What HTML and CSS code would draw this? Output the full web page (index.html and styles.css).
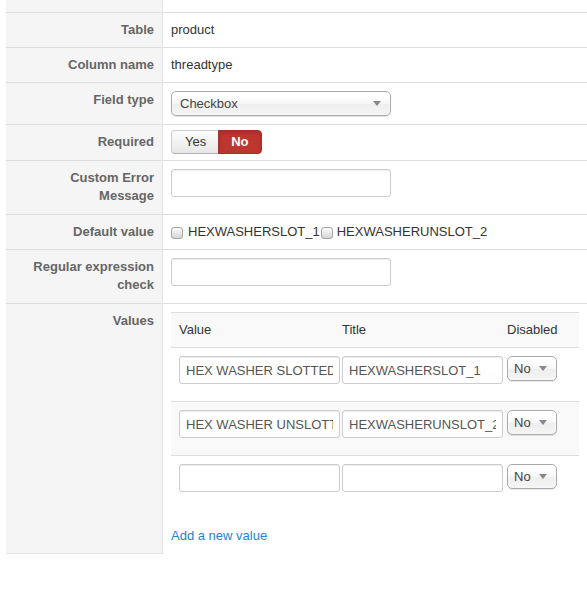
FILE: index.html
```html
<!DOCTYPE html>
<html lang="en">
<head>
<meta charset="utf-8">
<title>Field settings</title>
<link rel="stylesheet" href="styles.css">
</head>
<body>
<div class="page">
  <table class="form-table">
    <tr class="row-cut">
      <td class="key"></td>
      <td class="val"></td>
    </tr>
    <tr>
      <td class="key">Table</td>
      <td class="val">product</td>
    </tr>
    <tr>
      <td class="key">Column name</td>
      <td class="val">threadtype</td>
    </tr>
    <tr>
      <td class="key">Field type</td>
      <td class="val">
        <div class="chosen chosen-wide"><span>Checkbox</span><b class="caret"></b></div>
      </td>
    </tr>
    <tr>
      <td class="key">Required</td>
      <td class="val val-buttons">
        <div class="yesno">
          <span class="btn btn-yes">Yes</span>
          <span class="btn btn-no">No</span>
        </div>
      </td>
    </tr>
    <tr>
      <td class="key">Custom Error<br>Message</td>
      <td class="val"><input class="text-input" type="text"></td>
    </tr>
    <tr>
      <td class="key">Default value</td>
      <td class="val">
        <label class="opt"><input class="chk" type="checkbox">HEXWASHERSLOT_1</label><label class="opt"><input class="chk chk-next" type="checkbox">HEXWASHERUNSLOT_2</label>
      </td>
    </tr>
    <tr>
      <td class="key">Regular expression<br>check</td>
      <td class="val"><input class="text-input" type="text"></td>
    </tr>
    <tr class="row-last">
      <td class="key">Values</td>
      <td class="val">
        <table class="values">
          <tr class="head">
            <th class="c-value">Value</th>
            <th class="c-title">Title</th>
            <th class="c-dis">Disabled</th>
          </tr>
          <tr>
            <td class="c-value"><input class="cell-input" type="text" value="HEX WASHER SLOTTED"></td>
            <td class="c-title"><input class="cell-input" type="text" value="HEXWASHERSLOT_1"></td>
            <td class="c-dis"><div class="chosen chosen-small"><span>No</span><b class="caret"></b></div></td>
          </tr>
          <tr class="striped">
            <td class="c-value"><input class="cell-input" type="text" value="HEX WASHER UNSLOTTED"></td>
            <td class="c-title"><input class="cell-input" type="text" value="HEXWASHERUNSLOT_2"></td>
            <td class="c-dis"><div class="chosen chosen-small"><span>No</span><b class="caret"></b></div></td>
          </tr>
          <tr>
            <td class="c-value"><input class="cell-input" type="text"></td>
            <td class="c-title"><input class="cell-input" type="text"></td>
            <td class="c-dis"><div class="chosen chosen-small"><span>No</span><b class="caret"></b></div></td>
          </tr>
        </table>
        <p class="add-row"><a href="#" class="add-link">Add a new value</a></p>
      </td>
    </tr>
  </table>
</div>
</body>
</html>
```

FILE: styles.css
```css
html, body {
  margin: 0;
  background: #fff;
  overflow: hidden;
}

body {
  font-family: "Liberation Sans", Arial, sans-serif;
  font-size: 13px;
  line-height: 18px;
  color: #333;
}

.page {
  padding-left: 6px;
}

/* two-column settings table */
.form-table {
  width: 581px;
  border-collapse: collapse;
  table-layout: fixed;
}

.form-table > tbody > tr > td {
  padding: 8px;
  vertical-align: top;
  border-top: 1px solid #ddd;
}

.form-table td.key {
  width: 156px;
  background: #f5f5f5;
  text-align: right;
  font-weight: bold;
  color: #666;
  border-right: 1px solid #e3e3e3;
}

.form-table .row-cut td {
  height: 12px;
  padding: 0;
  border-top: 0;
}

.form-table .row-last td.key {
  border-bottom: 1px solid #e3e3e3;
}

.form-table td.val-buttons {
  padding-top: 5px;
  padding-bottom: 6px;
}

/* chosen-style dropdown */
.chosen {
  display: flex;
  align-items: center;
  justify-content: space-between;
  box-sizing: border-box;
  height: 25px;
  border: 1px solid #aaa;
  border-radius: 5px;
  background: linear-gradient(#fff 20%, #f6f6f6 50%, #eee 52%, #f4f4f4 100%);
  box-shadow: inset 0 0 3px #fff, 0 1px 1px rgba(0, 0, 0, 0.1);
  color: #444;
}

.chosen-wide {
  width: 220px;
  padding: 0 9px 0 8px;
}

.chosen-small {
  width: 50px;
  padding: 0 9px 0 6px;
}

.caret {
  width: 0;
  height: 0;
  border-left: 4px solid transparent;
  border-right: 4px solid transparent;
  border-top: 5px solid #888;
}

/* yes / no toggle */
.yesno {
  display: inline-flex;
}

.btn {
  display: inline-block;
  padding: 2px 12px;
  line-height: 18px;
  font-size: 13px;
  border: 1px solid;
}

.btn-yes {
  padding-left: 13px;
  background: linear-gradient(#fff, #e6e6e6);
  border-color: #ccc #ccc #b3b3b3;
  border-radius: 4px 0 0 4px;
  color: #333;
}

.btn-no {
  margin-left: -1px;
  background: #bd362f;
  border-color: #a8302a;
  border-radius: 0 4px 4px 0;
  color: #fff;
  font-weight: bold;
  box-shadow: inset 0 2px 4px rgba(0, 0, 0, 0.15);
}

/* text inputs */
.text-input,
.cell-input {
  display: block;
  box-sizing: border-box;
  height: 28px;
  margin: 0 0 9px;
  padding: 4px 6px;
  border: 1px solid #ccc;
  border-radius: 3px;
  box-shadow: inset 0 1px 1px rgba(0, 0, 0, 0.075);
  background: #fff;
  font-family: "Liberation Sans", Arial, sans-serif;
  font-size: 13px;
  line-height: 18px;
  color: #555;
}

.text-input {
  width: 220px;
}

.cell-input {
  width: 161px;
}

/* checkbox options */
.opt {
  white-space: nowrap;
}

.chk {
  appearance: none;
  -webkit-appearance: none;
  box-sizing: border-box;
  width: 12px;
  height: 12px;
  margin: 0 5px 0 0;
  border: 1px solid #a4a4a4;
  border-radius: 3px;
  background: linear-gradient(#fbfbfb, #d6d6d6);
  vertical-align: -3px;
}

.chk-next {
  margin-left: 1px;
  margin-right: 4px;
}

/* values sub-table */
.values {
  width: 100%;
  border-collapse: collapse;
  table-layout: fixed;
}

.values th,
.values td {
  padding: 8px 0 8px 1px;
  vertical-align: top;
  text-align: left;
  font-weight: normal;
  border-top: 1px solid #ddd;
}

.values .head th {
  background: #f9f9f9;
  color: #333;
}

.values .striped td {
  background: #f9f9f9;
}

.values .c-value {
  width: 162px;
  padding-left: 8px;
}

.values .c-title {
  width: 164px;
}

.values .c-dis {
  padding-left: 1px;
}

.add-row {
  margin: 18px 0 0;
}

.add-link {
  color: #2384d1;
  text-decoration: none;
}
```
